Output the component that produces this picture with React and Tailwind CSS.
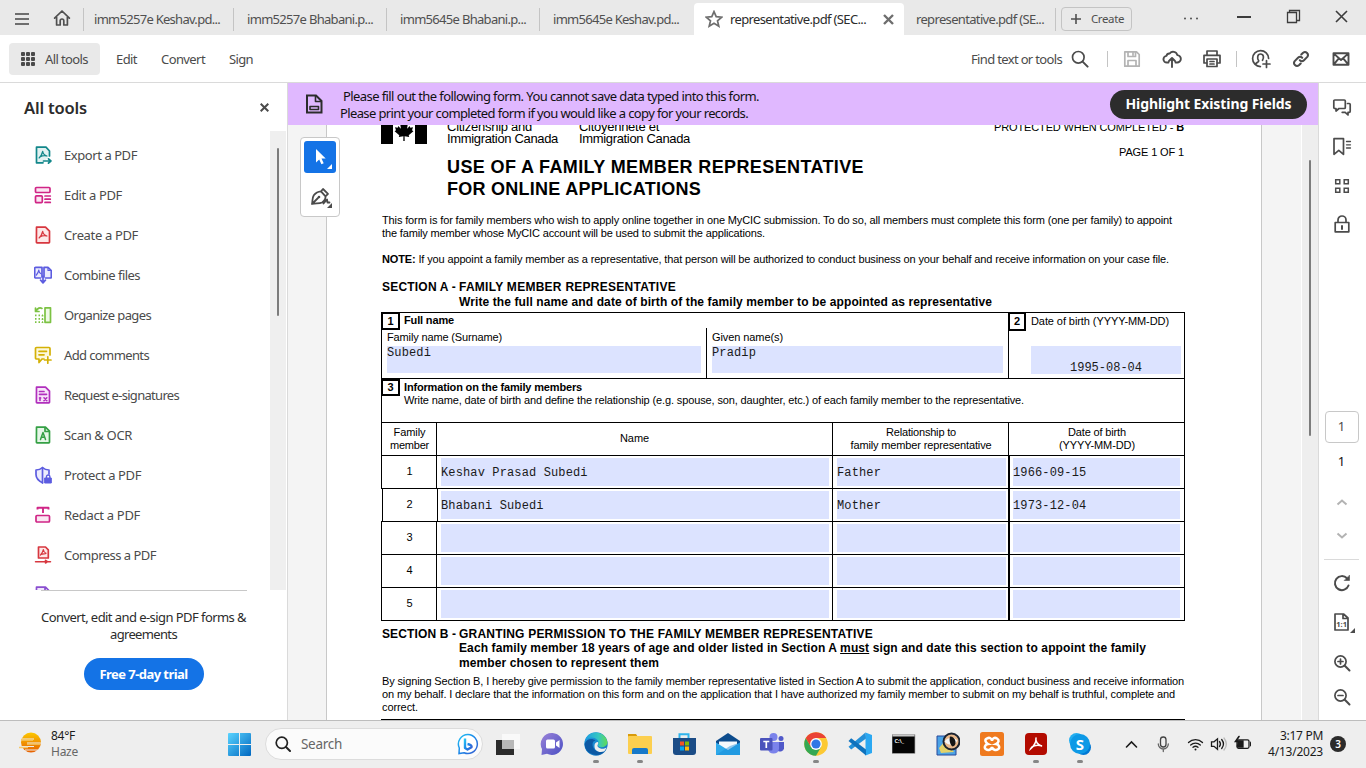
import React, { useLayoutEffect, useRef, useState } from "react";

function Run({ w, className = "", children }) {
  const ref = useRef(null);
  const [spacing, setSpacing] = useState(null);
  useLayoutEffect(() => {
    const el = ref.current;
    const n = el.textContent.length;
    setSpacing((w - el.getBoundingClientRect().width) / n);
  }, [w]);
  return (
    <span
      ref={ref}
      className={"inline-block shrink-0 whitespace-pre " + className}
      style={spacing === null ? undefined : { letterSpacing: spacing + "px" }}
    >
      {children}
    </span>
  );
}

/* Label of the application's own chrome, optically centred against icons. */
function Label({ className = "", ...rest }) {
  return <Run className={"pt-[2px] " + className} {...rest} />;
}

function Svg({ s = 18, vb = "0 0 18 18", className = "", children }) {
  return (
    <svg width={s} height={s} viewBox={vb} fill="none" stroke="currentColor" strokeWidth="1.7" strokeLinecap="round" strokeLinejoin="round" className={"shrink-0 " + className}>
      {children}
    </svg>
  );
}

/* ---------- title bar ---------- */

function Tab({ w, children, className = "" }) {
  return (
    <div className={"flex h-[23px] shrink-0 items-center border-l border-[#c4c4c4] " + className}>
      <Run w={w}>{children}</Run>
    </div>
  );
}

function TitleBar() {
  return (
    <div className="flex h-[35px] shrink-0 bg-[#e9e9e9] text-[13px] text-[#505050]">
      <div className="flex h-[39px] items-center">
        <svg width="14" height="12" className="-mt-[1px] ml-[15px] shrink-0" fill="#6e6e6e">
          <rect width="14" height="2" /><rect y="5" width="14" height="2" /><rect y="10" width="14" height="2" />
        </svg>
        <Svg s={18} className="-mt-[3px] ml-6 mr-3">
          <path d="M1.600 9.200 9 2l7.400 7.200M3.600 8v8h3.600v-4.200a1.800 1.800 0 0 1 3.600 0V16h3.600V8" />
        </Svg>
        <Tab w={126} className="w-[150px] pl-[10px]">imm5257e Keshav.pd...</Tab>
        <Tab w={126} className="w-[153px] pl-[13px]">imm5257e Bhabani.p...</Tab>
        <Tab w={126} className="w-[153px] pl-[13px]">imm5645e Bhabani.p...</Tab>
        <Tab w={126} className="w-[155px] pl-[13px]">imm5645e Keshav.pd...</Tab>
      </div>
      <div className="mt-[3px] flex h-8 w-[210px] shrink-0 items-center rounded-t bg-white pl-[11px] text-[#2c2c2c]">
        <Svg s={18} className="mr-px text-[#6e6e6e]">
          <path strokeLinejoin="miter" d="m9 1.600 2.200 5.100 5.500.5-4.200 3.600 1.300 5.400L9 13.300l-4.800 2.900 1.300-5.400-4.200-3.600 5.500-.5z" />
        </Svg>
        <Label w={136} className="ml-[6px]">representative.pdf (SEC...</Label>
        <svg width="11" height="11" className="ml-[17px] shrink-0" stroke="#6e6e6e" strokeWidth="2.400"><path d="m1 1 9 9M10 1 1 10" /></svg>
      </div>
      <div className="flex h-[39px] items-center">
        <Run w={128} className="ml-3">representative.pdf (SE...</Run>
        <div className="ml-[11px] h-[23px] border-l border-[#c4c4c4]" />
        <div className="-mt-[1px] ml-[5px] flex h-6 w-[71px] items-center rounded border border-[#c4c4c4] pl-[9px] text-[11.500px]">
          <svg width="10" height="10" stroke="#505050" strokeWidth="1.600"><path d="M5 0v10M0 5h10" /></svg>
          <Run w={33} className="ml-[10px]">Create</Run>
        </div>
      </div>
      <svg width="234" height="35" className="shrink-0" stroke="#3c3c3c" fill="none" strokeWidth="1.300">
        <g fill="#505050" stroke="none"><circle cx="53" cy="18.500" r="1" /><circle cx="59" cy="18.500" r="1" /><circle cx="65" cy="18.500" r="1" /></g>
        <path d="M105 17h14" strokeWidth="2" />
        <path d="M155.500 12.500h9v10h-9zM157.500 12v-1.500h10v10h-2.500" />
        <path d="m204 11 11 11M215 11l-11 11" strokeWidth="1.600" />
      </svg>
    </div>
  );
}

/* ---------- toolbar ---------- */

function ToolBar() {
  return (
    <div className="flex h-12 shrink-0 items-center border-b border-[#dadada] bg-white text-[13px] text-[#4b4b4b]">
      <div className="ml-[9px] flex h-8 w-[91px] items-center rounded bg-[#e9e9e9] pl-3">
        <svg width="14" height="14" fill="#4b4b4b">
          {[0, 5, 10].map((y) => [0, 5, 10].map((x) => <rect key={x + "-" + y} x={x} y={y} width="4" height="4" rx="1" />))}
        </svg>
        <Label w={43} className="ml-[10px]">All tools</Label>
      </div>
      <Label w={21} className="ml-4">Edit</Label>
      <Label w={44} className="ml-6">Convert</Label>
      <Label w={24} className="ml-6">Sign</Label>
      <div className="flex-1" />
      <Label w={91} className="mr-[9px]">Find text or tools</Label>
      <Svg s={18} className="mr-[18px]"><circle cx="7.300" cy="7.300" r="5.800" /><path d="m11.600 11.600 5 5" strokeWidth="2" /></Svg>
      <div className="mr-[15px] h-4 w-px bg-[#c4c4c4]" />
      <Svg s={18} className="mr-[21px] text-[#b3b3b3]">
        <path d="M1.800 1.800h11.700l2.700 2.700v11.700H1.800zM5 2v4.500h7.500V2M5 16v-5.500h8V16M10 3v2" />
      </Svg>
      <Svg s={20} vb="0 0 20 20" className="mr-5">
        <path strokeWidth="1.900" d="M6.500 13.500H5a3.300 3.300 0 0 1-.5-6.600 3 3 0 0 1 3.200-2.400 4.300 4.300 0 0 1 7.600 1.600 3.700 3.700 0 0 1-.3 7.400h-1.500M10 18V9.500M7 12l3-3 3 3" />
      </Svg>
      <Svg s={20} vb="0 0 20 20" className="mr-[14px]">
        <path d="M5 6V2h10v4M4.500 14H2V6.300h16V14h-2.500" /><path d="M5 10h10v7.500H5zM8 12.500h4M8 15h4" />
      </Svg>
      <div className="mr-[14px] h-4 w-px bg-[#c4c4c4]" />
      <Svg s={20} vb="0 0 20 20" className="mr-[21px]">
        <path d="M17.600 9.400A8 8 0 1 0 9.400 17.600M4.500 15.500c.3-2.500 3.500-1.800 3.200-3.800C6 9.500 6.200 5 9.500 5s3.600 3.800 2 6.300M15.500 11.500v7M12 15h7" />
      </Svg>
      <Svg s={18} className="mr-[22px]">
        <path strokeWidth="2" d="M7.800 10.200a3 3 0 0 0 4.200 0l3.300-3.300a3 3 0 0 0-4.200-4.200L9.300 4.500M10.200 7.800a3 3 0 0 0-4.200 0l-3.300 3.300a3 3 0 0 0 4.200 4.200l1.800-1.800" />
      </Svg>
      <Svg s={18} className="mr-4"><path strokeWidth="1.900" d="M1.500 3.200h15v11.600h-15zM1.800 3.600 9 10l7.200-6.400M1.800 14.400l5-6M16.200 14.400l-5-6" /></Svg>
    </div>
  );
}

/* ---------- left panel ---------- */

const acro = "M8.700 5.500c-.6 2.600-1.600 4.600-3.600 6.400M8.700 5.500c.3 2.200 1.500 3.600 4.200 4.500M6.300 10.600c1.800-.9 3.800-1 6-.8";
const sheet = "M2.500 1.200h9l4 4v11a.6.600 0 0 1-.6.600H3a.6.600 0 0 1-.6-.6z";

const tools = [
  ["Export a PDF", 73, "text-[#12878a]", <><path fill="#e3f2f2" d="M15.500 10V5l-3.500-3.800H2.500v15.600H9" /><path strokeWidth="1.300" d={acro} /><path d="M9.500 15h7M14.500 12.800l2.400 2.200-2.400 2.200" /></>],
  ["Edit a PDF", 58, "text-[#d02586]", <><rect x="1.500" y="1.500" width="14.500" height="5" rx="1" fill="#fbe6f2" /><rect x="1.500" y="9.800" width="6.800" height="6.800" rx="1" fill="#fbe6f2" /><path d="M11 10h5.300M11 13.200h5.300M11 16.400h5.300" /></>],
  ["Create a PDF", 74, "text-[#d7373f]", <><path fill="#fde8e8" d={sheet} /><path strokeWidth="1.300" d={acro} /></>],
  ["Combine files", 76, "text-[#5c5ce0]", <><path fill="#ececfd" d="M6.500 12H1.700a1 1 0 0 1-1-1V2.300a1 1 0 0 1 1-1H8V11M11.500 12h4.800a1 1 0 0 0 1-1V4.500L14 1.300h-4V11" /><path strokeWidth="1.200" d="M4.800 4.200C4.300 6.500 3.500 7.800 2.400 9M4.800 4.200c.2 1.800 1 3 2.300 3.600M14 1.500v3h3" /><path d="M9 10v6M6.600 14.200 9 16.800l2.400-2.600" /></>],
  ["Organize pages", 87, "text-[#7cc243]", <><path d="M1.500 2v3.500H5M2 5c1.500-3 4-3.800 6-2.600" /><path strokeDasharray="1.500 2" strokeLinecap="butt" d="M1 9.300h8M1 12.800h8M1 16.200h8M8.500 9v8" /><rect x="11" y="1.800" width="5.500" height="14.500" fill="#effae6" /></>],
  ["Add comments", 85, "text-[#d4b106]", <><path fill="#fdf8dc" d="M10 13H8l-3 3.500V13H2.500a1 1 0 0 1-1-1V2.500a1 1 0 0 1 1-1h12.500a1 1 0 0 1 1 1V9" /><path d="M5 5.300h7.500M5 8.800h5M13.800 10.800v6.400M10.600 14H17" /></>],
  ["Request e-signatures", 115, "text-[#b130bd]", <><path fill="#f8e6fa" d={sheet} /><path d="M5.500 5.500h4.500M5.500 8.300h7" /><path strokeWidth="1.600" d="M6 11.500v3M5.500 12h1.200M10 11.800l2.800 2.800M12.800 11.800 10 14.600" /></>],
  ["Scan & OCR", 68, "text-[#35a045]", <><path fill="#e6f6e8" d={sheet} /><path d="M11 1.500V5.500h4" /><path strokeWidth="1.500" d="m6.500 13.500 2.500-7 2.500 7M7.400 11.300h3.200" /></>],
  ["Protect a PDF", 77, "text-[#5c5ce0]", <><path fill="#ececfd" d="M8.500 16.800C4 14.500 2 12 2 8.500V4c2.500 0 4.700-.8 6.500-2.500C10.300 3.200 12.500 4 15 4v4" /><path d="M8.500 1.800v15" /><rect x="11" y="12" width="6.300" height="5" fill="currentColor" strokeWidth="1" /><path strokeWidth="1.400" d="M12.500 12v-1.300a1.700 1.700 0 0 1 3.400 0V12" /></>],
  ["Redact a PDF", 76, "text-[#d02586]", <><path strokeWidth="1.900" d="M3.500 3.500V1.800h11v1.700M9 2v5" strokeLinecap="butt" /><rect x="2" y="9.500" width="13.500" height="6.500" rx="1" fill="#fbe6f2" /></>],
  ["Compress a PDF", 92, "text-[#d7373f]", <><path fill="#fde8e8" d="M4.500 1h7l2.800 2.800v8.200H4.500z" /><path strokeWidth="1.200" d="M9.300 3.500C8.800 6 8 7.500 6.500 9M9.300 3.500c.3 2 1 3 2.800 3.700M7 8.300l4.500-.6" /><path d="M1.500 15.700h15M11.500 14.300v2.800l2-1.400z" strokeWidth="1.500" /></>],
  ["", 0, "text-[#8a4fd0]", <path key="p" fill="#efe6fa" d={sheet + "M11 1.500V5.500h4"} />],
];

function LeftPanel() {
  return (
    <div className="flex w-[288px] shrink-0 flex-col border-r border-[#dadada] bg-white text-[13px] text-[#4b4b4b]">
      <div className="flex h-12 shrink-0 items-center pl-6 pr-[18px]">
        <Label w={63} className="text-[16.500px] font-semibold text-[#2c2c2c]">All tools</Label>
        <svg width="9" height="9" className="ml-auto" stroke="#4b4b4b" strokeWidth="2"><path d="m.7.700 7.600 7.600M8.300.700.700 8.300" /></svg>
      </div>
      <div className="flex h-[459px] shrink-0 pr-px">
        <div className="h-[459px] w-[270px] overflow-hidden pt-1">
          {tools.map(([name, w, color, icon], i) => (
            <div key={i} className="flex h-10 items-center pl-[34px]">
              <Svg className={"mr-3 " + color}>{icon}</Svg>
              {name && <Label w={w}>{name}</Label>}
            </div>
          ))}
        </div>
        <div className="h-[459px] w-4 bg-[#efefef] pl-[7px] pt-[17px]">
          <div className="h-[168px] w-0.5 rounded bg-[#7c7c7c]" />
        </div>
      </div>
      <div className="ml-[41px] h-px w-[206px] bg-[#c8c8c8]" />
      <div className="mt-[18px] flex flex-col items-center text-[#2c2c2c]">
        <Run w={205} className="leading-[17px]">Convert, edit and e-sign PDF forms &amp;</Run>
        <Run w={67} className="leading-[17px]">agreements</Run>
        <div className="mt-[15px] flex h-8 w-[120px] items-center justify-center rounded-full bg-[#1473e6] text-white">
          <Label w={88} className="font-bold">Free 7-day trial</Label>
        </div>
      </div>
    </div>
  );
}

/* ---------- document ---------- */

const mono = "font-['Liberation_Mono',monospace] text-[12px] leading-[14px] text-[#1a1a1a]";

function NumberBox({ n, className = "" }) {
  return <div className={"flex shrink-0 items-center justify-center border-2 border-black text-[11px] font-bold " + className}>{n}</div>;
}

const members = [
  ["1", "Keshav Prasad Subedi", "Father", "1966-09-15"],
  ["2", "Bhabani Subedi", "Mother", "1973-12-04"],
  ["3", "", "", ""],
  ["4", "", "", ""],
  ["5", "", "", ""],
];

function Field({ w, children }) {
  return <div className={"flex h-7 items-center whitespace-pre bg-[#dce3ff] pt-[1px] tracking-[0.13px] " + mono + " " + w}>{children}</div>;
}

function FormTable() {
  return (
    <div className="mt-[2px] w-[804px]">
      <div className="flex h-[66px] border-r border-t border-black">
        <div className="w-[627px] border-l border-black">
          <div className="flex h-[15px] items-start">
            <NumberBox n="1" className="-ml-px -mt-px h-[18px] w-[19px]" />
            <Run w={50} className="ml-1 mt-[1px] font-bold">Full name</Run>
          </div>
          <div className="flex h-[50px]">
            <div className="w-[324px] pl-[5px] pt-[3px]">
              <Run w={115} className="block">Family name (Surname)</Run>
              <div className={"mt-[2px] h-[27px] w-[314px] bg-[#dce3ff] tracking-[0.13px] " + mono}>Subedi</div>
            </div>
            <div className="border-l border-black pl-[5px] pt-[3px]">
              <Run w={71} className="block">Given name(s)</Run>
              <div className={"mt-[2px] h-[27px] w-[291px] bg-[#dce3ff] tracking-[0.13px] " + mono}>Pradip</div>
            </div>
          </div>
        </div>
        <div className="flex flex-1 border-l border-black">
          <NumberBox n="2" className="-ml-px -mt-px h-[19px] w-[18px]" />
          <div className="ml-[5px] flex flex-col items-start pt-[2px]">
            <Run w={138}>Date of birth (YYYY-MM-DD)</Run>
            <div className="mt-[18px] flex h-7 w-[150px] items-end justify-center bg-[#dce3ff]">
              <div className={"-mb-px " + mono}>1995-08-04</div>
            </div>
          </div>
        </div>
      </div>
      <div className="flex h-[44px] border-x border-t border-black">
        <NumberBox n="3" className="-ml-px h-[17px] w-[19px]" />
        <div className="ml-1 flex flex-col items-start pt-[2px]">
          <Run w={178} className="font-bold">Information on the family members</Run>
          <Run w={620}>Write name, date of birth and define the relationship (e.g. spouse, son, daughter, etc.) of each family member to the representative.</Run>
        </div>
      </div>
      <div className="flex h-[33px] border-x border-t border-black text-center">
        <div className="w-[54px] pl-px pt-[3px]"><Run w={32}>Family</Run><Run w={39}>member</Run></div>
        <div className="w-[396px] border-l border-black pt-[9px]"><Run w={29}>Name</Run></div>
        <div className="w-[176px] border-l border-black pl-px pt-[3px]"><Run w={70}>Relationship to</Run><Run w={141}>family member representative</Run></div>
        <div className="flex-1 border-l border-black pl-px pt-[3px]"><Run w={58} className="mx-6">Date of birth</Run><Run w={76}>(YYYY-MM-DD)</Run></div>
      </div>
      {members.map(([n, name, rel, dob]) => (
        <div key={n} className="h-[33px] border-r border-t border-black">
          <div className={"flex h-8 border-l border-black " + (n === "2" ? "ml-px" : "")}>
            <div className={"pb-[1px] text-center leading-[30px] " + (n === "2" ? "w-[54px] pr-px" : "w-[54px] pl-px")}>{n}</div>
            <div className={"border-l border-black pt-[2px] " + (n === "2" ? "w-[395px] pl-[3px]" : "w-[396px] pl-1")}><Field w="w-[388px]">{name}</Field></div>
            <div className="w-[176px] border-l border-black pl-1 pt-[2px]"><Field w="w-[169px]">{rel}</Field></div>
            <div className="flex-1 border-l-2 border-black pl-[3px] pt-[2px]"><Field w="w-[167px]">{dob}</Field></div>
          </div>
        </div>
      ))}
      <div className="h-px bg-black" />
    </div>
  );
}

function Page() {
  return (
    <div className="flex w-[936px] shrink-0 flex-col items-start border-x border-[#c8c8c8] bg-white pl-[54px] font-['Liberation_Sans',Arial,sans-serif] text-[11px] leading-[13px] text-black">
      <div className="-mt-[6px] flex h-[26px] w-[804px] items-start text-[13px]">
        <svg width="46" height="25" viewBox="0 0 46 25" className="shrink-0">
          <rect width="12" height="25" /><rect x="34" width="12" height="25" />
          <path d="m23 2 1.800 3.600 2-.9-.7 5 2.600-2.600.6 1.600 2.700-.4-1 3 1.400.9-4.700 4 .5 1.700-4.600-.6.100 4.700h-1.400l.1-4.700-4.600.6.500-1.700-4.700-4 1.400-.9-1-3 2.700.4.600-1.600 2.600 2.600-.7-5 2 .9z" />
        </svg>
        <div className="ml-5 flex w-[132px] flex-col items-start pt-px"><Run w={85}>Citizenship and</Run><Run w={111} className="-mt-px">Immigration Canada</Run></div>
        <div className="flex flex-col items-start pt-px"><Run w={80}>Citoyenneté et</Run><Run w={111} className="-mt-px">Immigration Canada</Run></div>
        <div className="ml-auto flex flex-col items-end pr-px pt-[2px] text-[11px]">
          <Run w={190}>PROTECTED WHEN COMPLETED - <b>B</b></Run>
          <Run w={65} className="mt-3">PAGE 1 OF 1</Run>
        </div>
      </div>
      <div className="ml-[66px] mt-[11px] flex flex-col items-start text-[18px] font-bold leading-[22px]">
        <Run w={417}>USE OF A FAMILY MEMBER REPRESENTATIVE</Run>
        <Run w={254}>FOR ONLINE APPLICATIONS</Run>
      </div>
      <div className="ml-px mt-[14px] flex flex-col items-start">
        <Run w={790}>This form is for family members who wish to apply online together in one MyCIC submission. To do so, all members must complete this form (one per family) to appoint</Run>
        <Run w={383}>the family member whose MyCIC account will be used to submit the applications.</Run>
        <Run w={787} className="mt-[13px]"><b>NOTE:</b> If you appoint a family member as a representative, that person will be authorized to conduct business on your behalf and receive information on your case file.</Run>
      </div>
      <div className="ml-px mt-[14px] flex text-[12px] font-bold leading-[15px]">
        <div className="w-[77px]"><Run w={74}>SECTION A -</Run></div>
        <div className="flex flex-col items-start">
          <Run w={217}>FAMILY MEMBER REPRESENTATIVE</Run>
          <Run w={533}>Write the full name and date of birth of the family member to be appointed as representative</Run>
        </div>
      </div>
      <FormTable />
      <div className="ml-px mt-[6px] flex text-[12px] font-bold leading-[15px]">
        <div className="w-[77px]"><Run w={74}>SECTION B -</Run></div>
        <div className="flex flex-col items-start">
          <Run w={414} className="-mb-px">GRANTING PERMISSION TO THE FAMILY MEMBER REPRESENTATIVE</Run>
          <Run w={687}>Each family member 18 years of age and older listed in Section A <u>must</u> sign and date this section to appoint the family</Run>
          <Run w={200}>member chosen to represent them</Run>
        </div>
      </div>
      <div className="ml-px mt-1 flex flex-col items-start">
        <Run w={802}>By signing Section B, I hereby give permission to the family member representative listed in Section A to submit the application, conduct business and receive information</Run>
        <Run w={793}>on my behalf. I declare that the information on this form and on the application that I have authorized my family member to submit on my behalf is truthful, complete and</Run>
        <Run w={36}>correct.</Run>
      </div>
      <div className="mt-[5px] h-px w-[804px] bg-black" />
    </div>
  );
}

function QuickTools() {
  return (
    <div className="absolute left-[12px] top-[12px] flex h-[80px] w-[40px] flex-col items-center rounded border border-[#c8c8c8] bg-white pt-[3px]">
      <div className="flex h-8 w-8 items-center justify-center rounded-[3px] bg-[#1473e6]">
        <svg width="32" height="32" fill="#fff"><path d="M12 8v13.500l3.200-3 2.200 4.700 2.300-1-2.200-4.700h4.200z" /><path d="M28 23v5h-5z" /></svg>
      </div>
      <svg width="32" height="38" viewBox="0 0 32 38" fill="none" stroke="#4b4b4b" strokeWidth="1.800" strokeLinejoin="round" strokeLinecap="round">
        <path d="M8 31c.8-3.500 0-6 1.800-8.700C11.500 20 14 18.500 17 18.300l4.500 5c.2 2.700-1 4.800-3.500 6.200-3 1.500-6.500.3-10 1.500zM8.500 30.500l5.500-5.500M17 18.300l2-2.300 5 4.800-2.500 2.500M19.500 30.500l3.500-4 .5 3h2" />
        <circle cx="15" cy="24" r="1.300" fill="#4b4b4b" stroke="none" /><path d="M28 30v5h-5z" fill="#4b4b4b" stroke="none" />
      </svg>
    </div>
  );
}

function Viewer() {
  return (
    <div className="flex w-[1030px] shrink-0 flex-col">
      <div className="flex h-[42px] shrink-0 items-center bg-[#e0b8ff] text-[13px] text-[#111]">
        <Svg s={20} vb="0 0 20 20" className="ml-4 mr-4 text-[#2c2c2c]">
          <path strokeWidth="2" d="M3 1.500h9l5.500 5.500v11.500H3z" strokeLinejoin="miter" /><path strokeWidth="1.600" d="M11.500 2v5.500H17M6 12.500h8.500v3H6z" />
        </Svg>
        <div className="flex flex-col items-start pt-[2px] leading-[17px]">
          <Run w={416} className="ml-[3px]">Please fill out the following form. You cannot save data typed into this form.</Run>
          <Run w={408}>Please print your completed form if you would like a copy for your records.</Run>
        </div>
        <div className="ml-auto mr-[11px] flex h-[29px] w-[197px] items-center justify-center rounded-full bg-[#2c2c2c] text-[14px] text-white">
          <Run w={166} className="-mt-[1px] font-bold">Highlight Existing Fields</Run>
        </div>
      </div>
      <div className="relative flex h-[595px] overflow-hidden bg-[#f4f4f4] pl-[38px]">
        <Page />
        <div className="ml-auto w-[17px] border-l border-white bg-[#eeeeee] pl-[7px] pt-[35px]"><div className="h-[276px] w-0.5 rounded bg-[#7c7c7c]" /></div>
        <QuickTools />
      </div>
    </div>
  );
}

/* ---------- right rail ---------- */

function RightRail() {
  return (
    <div className="flex flex-1 flex-col items-center border-l border-[#dadada] bg-white pr-[2px] text-[#4b4b4b]">
      <Svg s={20} vb="0 0 20 20" className="mt-[15px]"><path d="M4 13v-2.500H2.800a1 1 0 0 1-1-1V3a1 1 0 0 1 1-1h9.500a1 1 0 0 1 1 1v6.500a1 1 0 0 1-1 1H7zM15.500 5.500h1.700a1 1 0 0 1 1 1v6.800a1 1 0 0 1-1 1H16V17l-2.800-2.700h-3" /></Svg>
      <Svg s={20} vb="0 0 20 20" className="mt-[19px]"><path d="M2 1.700h9.500v15.600l-4.700-4-4.800 4z" /><path d="M14.500 4.500h4M14.500 7.800h4M14.500 11h4" strokeWidth="1.300" /></Svg>
      <Svg s={16} vb="0 0 16 16" className="mt-[21px]"><g strokeLinejoin="miter" strokeWidth="1.500"><path d="M1.700 1.700h4.100v4.100H1.700zM10.200 1.700h4.100v4.100h-4.100zM1.700 10.200h4.100v4.100H1.700zM10.200 10.200h4.100v4.100h-4.100z" /></g></Svg>
      <Svg s={18} className="mt-[21px]"><path d="M2.200 7.500h13.600v9.300H2.200zM5 7.200V5a4 4 0 0 1 8 0v2.200" /><path d="M9 11v3" strokeWidth="2" /></Svg>
      <div className="mt-[178px] flex h-8 w-[34px] shrink-0 items-center justify-center rounded border border-[#c8c8c8] text-[13px]">1</div>
      <div className="mt-[8px] text-[13px] leading-5 text-[#111]">1</div>
      <svg width="12" height="8" className="mt-[27px] shrink-0" fill="none" stroke="#b3b3b3" strokeWidth="2"><path d="m1.500 6.500 4.500-4 4.500 4" /></svg>
      <svg width="12" height="8" className="mt-[26px] shrink-0" fill="none" stroke="#b3b3b3" strokeWidth="2"><path d="m1.500 1.500 4.500 4 4.500-4" /></svg>
      <div className="mt-[19px] h-px w-[35px] shrink-0 bg-[#dadada]" />
      <Svg s={18} className="mt-[14px]"><path strokeWidth="2" d="M15.500 11.500A7 7 0 1 1 14 4.300" /><path d="M16.500 1.500v5h-5z" fill="currentColor" strokeWidth=".6" /></Svg>
      <svg width="26" height="22" viewBox="0 0 26 22" className="ml-[4px] mt-[20px] shrink-0" fill="none" stroke="#4b4b4b" strokeWidth="1.700" strokeLinejoin="round">
        <path d="M4 2h8.500L17 6v12H4zM12 2v4.500h4.500" /><path d="M24 16v5h-5z" fill="#4b4b4b" stroke="none" />
        <text x="10.600" y="15" textAnchor="middle" fontSize="7.500" fontWeight="700" fill="#4b4b4b" stroke="none">1:1</text>
      </svg>
      <Svg s={18} className="mt-[20px]"><circle cx="7.500" cy="7.500" r="5.600" /><path d="m11.800 11.800 4.700 4.700" strokeWidth="2" /><path d="M7.500 5v5M5 7.500h5" /></Svg>
      <Svg s={18} className="mt-[16px]"><circle cx="7.500" cy="7.500" r="5.600" /><path d="m11.800 11.800 4.700 4.700" strokeWidth="2" /><path d="M5 7.500h5" /></Svg>
    </div>
  );
}

/* ---------- taskbar ---------- */

const apps = [
  [<g key="a"><path d="M0 8h18v15H0z" fill="#2b2b2b" /><path d="M6 2h18v15H6z" fill="#f9f9f9" /><path d="M6 8h12v9H6z" fill="#b8b8b8" /></g>, false],
  [<g key="b"><path d="M12.500 1A11 11 0 1 1 7 21.800L1.500 23 2 17A11 11 0 0 1 12.500 1z" fill="url(#chat)" /><rect x="6" y="7.500" width="9" height="9" rx="1.500" fill="#fff" /><path d="m16 10.500 3.500-2.500v8L16 13.500z" fill="#fff" /></g>, false],
  [<g key="c"><circle cx="12" cy="12" r="11.700" fill="url(#edge)" /><path d="M.5 12C2 7 8 5.500 11.500 8.500 8 9 7.500 14 10.500 17.500c3 3 8 2.500 10.800 1A11.700 11.700 0 0 1 .5 12z" fill="#0c59a4" /><path d="M1 9C3 5 10 4 13.500 8c2 2.500.5 4.500.5 6 3 2.500 8 1.500 9.500-3-1-13-20-14.500-22.500-2z" fill="url(#edge2)" /><path d="M14 10c1 2-1.500 3 0 5 2.500 2.500 6 2 8.500.5-.7 1.800-1.500 3-2.500 4-5 1.500-10-.5-9.500-6 0-2 1.500-3.500 3.500-3.500z" fill="#eee" /></g>, true],
  [<g key="d"><path d="M0 2h8l2 3v4H0z" fill="#d99b0c" /><rect y="4" width="24" height="18" rx="1" fill="#fccf4f" /><path d="M4 22v-4a2 2 0 0 1 2-2h12a2 2 0 0 1 2 2v4z" fill="#1779c9" /></g>, true],
  [<g key="e"><path d="M7.500 7V2.300h9V7" fill="none" stroke="#2fb4ec" strokeWidth="2" /><path d="M1 6h23v14a3 3 0 0 1-3 3H4a3 3 0 0 1-3-3z" fill="#1b4c86" /><path d="M8 9.500h4v4H8z" fill="#f35325" /><path d="M13 9.500h4v4h-4z" fill="#81bc06" /><path d="M8 14.500h4v4H8z" fill="#05a6f0" /><path d="M13 14.500h4v4h-4z" fill="#ffba08" /></g>, false],
  [<g key="f"><path d="M0 9 12 1l12 8v3H0z" fill="#0c4b8c" /><path d="M3 9.500h18V18H3z" fill="#f4f8fc" /><path d="M0 10.500 12 18l12-7.500V23H0z" fill="#2fa9ea" /><path d="m0 23 14-9 10-3.500V23z" fill="#1587d6" opacity=".45" /></g>, false],
  [<g key="g"><circle cx="13.500" cy="5" r="4" fill="#7b83eb" /><circle cx="21" cy="6.500" r="2.500" fill="#5059c9" /><path d="M18 10h6v6.500a4 4 0 0 1-6 2.500z" fill="#5059c9" /><path d="M8 10h11v7a5.600 5.600 0 0 1-11 0z" fill="#7b83eb" /><rect y="6" width="12.500" height="12.500" rx="1" fill="#4b53bc" /><path d="M3.300 9.500h6M6.300 9.500v6.500" stroke="#fff" strokeWidth="1.700" /></g>, false],
  [<g key="h"><circle cx="12" cy="12" r="11.800" fill="#fcc934" /><path d="M1.800 6.100A11.800 11.800 0 0 0 12 23.800l5.200-9L7 15z" fill="#34a853" /><path d="M1.800 6.100A11.800 11.800 0 0 1 22.200 6.100H12L7 15z" fill="#ea4335" /><circle cx="12" cy="12" r="5.900" fill="#fff" /><circle cx="12" cy="12" r="4.600" fill="#2f77e5" /></g>, true],
  [<g key="i"><path d="M17.500.5 24 3v18l-6.500 2.500z" fill="#2aa8f2" /><path d="m17.500.5-17 14.300 2.700 2.700L18 6.500z" fill="#2490d8" /><path d="m.5 9 2.700-2.700L18 17.500v6z" fill="#0f72bd" /></g>, false],
  [<g key="j"><path d="M0 2.500h23v19H0z" fill="#050505" stroke="#aaa" strokeWidth=".7" /><path d="M.4 2.500h22.200v2H.4z" fill="#c9c9c9" /><text x="2.500" y="11" fontSize="5.500" fontWeight="700" fill="#eee">C:\_</text></g>, false],
  [<g key="k"><path d="M1 4h19v19H1z" fill="#4ba3e6" stroke="#28489a" /><path d="m3 16 6-7 9 11-13 1z" fill="#e3d26a" /><circle cx="15.500" cy="9.500" r="8" fill="#e9b98c" stroke="#1c2430" strokeWidth="2" /><path d="M8.500 9.500c3.500-4.500 8.500-5 13-1-2.500 5-8.500 6-13 1z" fill="#f4f4f4" /><path d="M14 4.500c3 0 5 2 5.500 5s-1 4.500-3 5c-2.500-2-3.500-6-2.500-10z" fill="#161616" /></g>, false],
  [<g key="l"><rect width="24" height="24" rx="2.500" fill="#ef7a1f" /><path d="M7 6.500c2.500-1.500 5 0 5 2.500 0-2.500 2.500-4 5-2.500s2 4-1 5.500c3.500.5 4 4 2 5.300s-5.500.5-6-2.300c-.5 2.800-4 3.600-6 2.300S4.500 12.500 8 12c-3-1.500-3.500-4.500-1-5.500z" fill="none" stroke="#fff" strokeWidth="2.500" /></g>, false],
  [<g key="m"><rect x="1" y="1" width="22" height="22" rx="4" fill="#b30b00" /><path d="M12 6c.3 4-2 8-5.500 11 1-3 6-4.500 11-3.200M12 6c-.8 3 1.500 7 5.500 8" fill="none" stroke="#fff" strokeWidth="1.500" strokeLinecap="round" /></g>, true],
  [<g key="n"><circle cx="8.500" cy="8.500" r="7.500" fill="#22aef0" /><circle cx="15.500" cy="15.500" r="7.500" fill="#0078d4" /><circle cx="12" cy="12" r="10" fill="#0d99e6" /><text x="12" y="17.500" textAnchor="middle" fontSize="15" fontWeight="700" fill="#fff">S</text></g>, true],
];

function Taskbar() {
  return (
    <div className="flex h-12 shrink-0 items-start border-t border-[#bdbdbd] bg-[#eeeeee] text-[12px] text-[#1b1b1b]">
      <svg width="24" height="24" viewBox="0 0 24 24" className="ml-[19px] mt-[10px] shrink-0">
        <circle cx="12" cy="11.500" r="10" fill="url(#sun)" />
        <path d="M3 8h12M8 12h15M1 15.500h14M6 19h13" stroke="#eeeeee" strokeWidth="1" />
        <path d="M0 16.500h9M8 13.200h13M2 9.200h12" stroke="#f5c869" strokeWidth="1.300" />
      </svg>
      <div className="ml-[8px] mt-[7px] flex w-[178px] flex-col items-start leading-4">
        <Run w={24}>84°F</Run>
        <Run w={27} className="text-[#666]">Haze</Run>
      </div>
      <svg width="23" height="23" className="-ml-px mt-3 shrink-0" fill="url(#win)">
        <path d="M0 1a1 1 0 0 1 1-1h10v11H0zM12 0h10a1 1 0 0 1 1 1v10H12zM0 12h11v11H1a1 1 0 0 1-1-1zM12 12h11v10a1 1 0 0 1-1 1H12z" />
      </svg>
      <div className="ml-[14px] mt-[7px] flex h-8 w-[218px] items-center rounded-full border border-[#dcdcdc] bg-[#fbfbfb] pl-[9px] text-[13.500px] text-[#666]">
        <Svg s={16} vb="0 0 16 16" className="text-[#222]"><circle cx="6.800" cy="6.800" r="5.600" /><path d="m11 11 4 4" strokeWidth="2" /></Svg>
        <Run w={41} className="ml-[10px]">Search</Run>
        <svg width="22" height="22" viewBox="0 0 22 22" className="ml-auto mr-[3px]">
          <path d="M11 1.500A9.500 9.500 0 1 1 7 19.700l-5 .8.300-5.500A9.500 9.500 0 0 1 11 1.500z" fill="#fff" stroke="url(#bing)" strokeWidth="1.500" />
          <path d="M8 5.500v9.500l2.500 1.500 4-2.300c.5-1.500-.5-2.500-4-3.200" fill="none" stroke="url(#bing)" strokeWidth="2.400" strokeLinejoin="round" />
        </svg>
      </div>
      <div className="ml-[3px] flex">
        {apps.map(([icon, open], i) => (
          <div key={i} className="flex h-[47px] w-11 flex-col items-center pt-[11px]">
            <svg width="24" height="24" viewBox="0 0 24 24">{icon}</svg>
            {open && <div className="mt-[4px] h-[3px] w-1.5 rounded-full bg-[#868686]" />}
          </div>
        ))}
      </div>
      <svg width="126" height="46" viewBox="0 0 126 46" className="ml-[23px] shrink-0" fill="none" stroke="#1b1b1b" strokeWidth="1.300" strokeLinecap="round">
        <path d="m1.500 26 5-5 5 5" strokeWidth="1.600" />
        <rect x="35.500" y="16" width="5.500" height="10" rx="2.700" stroke="#444" /><path d="M33.300 23a5 5 0 0 0 10 0M38.300 28v2.500" stroke="#666" />
        <path d="M63.500 21.500a10 10 0 0 1 14 0M65.700 24a7 7 0 0 1 9.600 0M68 26.300a3.800 3.800 0 0 1 5 0" /><circle cx="70.500" cy="28.500" r="1" fill="#1b1b1b" stroke="none" />
        <path d="M86.500 20.800h2.500l3.500-3v10.500l-3.500-3h-2.500zM94.500 20.500c1.200 1.600 1.200 3.500 0 5M96.700 18.500c2.300 3 2.300 6.200 0 9" /><path d="M99 17c3 4 3 8.500 0 12" stroke="#bbb" />
        <rect x="112" y="18.800" width="12" height="8.500" rx="1.500" /><path d="M126 21.500v3" strokeWidth="2" /><path d="M113 20h5v6h-5z" fill="#1b1b1b" /><path d="m114 15.500-3.500 5h4l-2 4.500" strokeWidth="1.600" />
      </svg>
      <div className="-ml-px mr-[7px] mt-[7px] flex w-[73px] flex-col items-end leading-4">
        <Run w={43}>3:17 PM</Run>
        <Run w={55}>4/13/2023</Run>
      </div>
      <div className="mt-[15px] flex h-4 w-4 items-center justify-center rounded-full bg-[#2b2b2b] text-[10px] font-semibold text-white">3</div>
      <svg width="0" height="0">
        <defs>
          <linearGradient id="win" x1="0" y1="0" x2="1" y2="1"><stop stopColor="#5ad4ff" /><stop offset="1" stopColor="#0067c0" /></linearGradient>
          <linearGradient id="sun" x1="0" y1="0" x2="0" y2="1"><stop stopColor="#fcc800" /><stop offset="1" stopColor="#e65f00" /></linearGradient>
          <linearGradient id="bing" x1="0" y1="0" x2="1" y2="1"><stop stopColor="#28c5f4" /><stop offset=".5" stopColor="#1a86e8" /><stop offset="1" stopColor="#3a5fd0" /></linearGradient>
          <linearGradient id="chat" x1="0" y1="0" x2="1" y2="1"><stop stopColor="#9b83d8" /><stop offset="1" stopColor="#4a4fc4" /></linearGradient>
          <linearGradient id="edge" x1="0" y1="0" x2="1" y2="1"><stop stopColor="#1f9fe0" /><stop offset="1" stopColor="#1570c0" /></linearGradient>
          <linearGradient id="edge2" x1="0" y1="0" x2="1" y2="0"><stop stopColor="#1f9de3" /><stop offset=".6" stopColor="#35c7c0" /><stop offset="1" stopColor="#62dc50" /></linearGradient>
        </defs>
      </svg>
    </div>
  );
}

export default function App() {
  return (
    <div className="flex h-[768px] w-[1366px] flex-col overflow-hidden bg-white font-['Noto_Sans','Open_Sans',sans-serif]">
      <TitleBar />
      <ToolBar />
      <div className="flex h-[637px] shrink-0 overflow-hidden">
        <LeftPanel />
        <Viewer />
        <RightRail />
      </div>
      <Taskbar />
    </div>
  );
}
